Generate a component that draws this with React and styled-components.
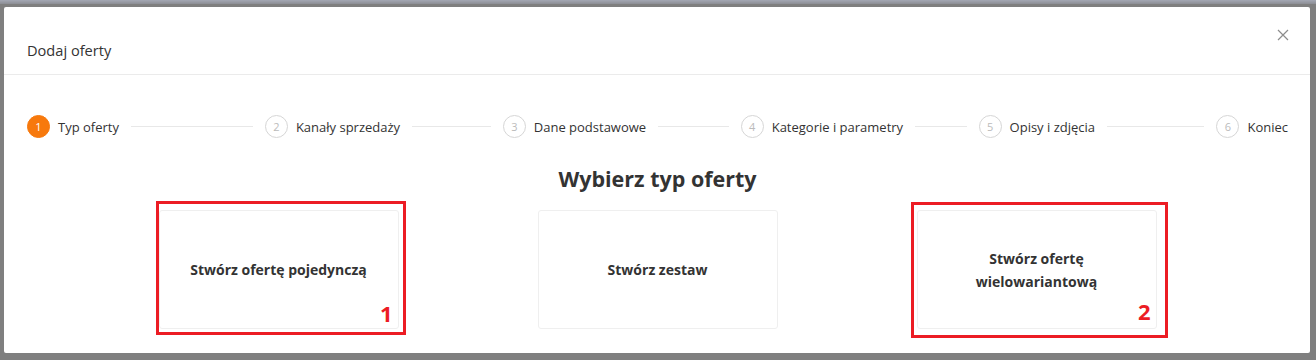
import React from "react"
import styled, { createGlobalStyle } from "styled-components"

const GlobalStyle = createGlobalStyle`
  html, body {
    margin: 0;
    padding: 0;
    background: #7f7f7f;
  }
  body {
    font-family: "Open Sans", "Noto Sans", sans-serif;
    color: #333;
  }
`

const steps = [
  "Typ oferty",
  "Kanały sprzedaży",
  "Dane podstawowe",
  "Kategorie i parametry",
  "Opisy i zdjęcia",
  "Koniec"
]

const cards = [
  { label: "Stwórz ofertę pojedynczą", mark: { n: 1, t: 9, r: 7, b: 6, l: 3, nr: 10, nb: 8 } },
  { label: "Stwórz zestaw" },
  { label: "Stwórz ofertę wielowariantową", mark: { n: 2, t: 8, r: 11, b: 9, l: 6, nr: 14, nb: 13 } }
]

const App = () => {
  return (
    <Page>
      <GlobalStyle />
      <TopStrip />
      <Modal>
        <Header>
          <Title>Dodaj oferty</Title>
          <Close aria-label="Zamknij">
            <svg width="12" height="12" viewBox="0 0 12 12">
              <path d="M1 1L11 11M11 1L1 11" stroke="#8c8c8c" strokeWidth="1.2" fill="none" />
            </svg>
          </Close>
        </Header>
        <Body>
          <Steps>
            {steps.map((s, i) => {
              const last = i === steps.length - 1
              return (
                <Step key={s} last={last}>
                  <StepIcon active={i === 0}>{i + 1}</StepIcon>
                  <StepLabel>{s}</StepLabel>
                  {!last && <StepLine />}
                </Step>
              )
            })}
          </Steps>
          <Heading>Wybierz typ oferty</Heading>
          <Cards>
            {cards.map(c => (
              <CardWrap key={c.label}>
                <Card>{c.label}</Card>
                {c.mark && (
                  <Mark t={c.mark.t} r={c.mark.r} b={c.mark.b} l={c.mark.l}>
                    <MarkNumber nr={c.mark.nr} nb={c.mark.nb}>{c.mark.n}</MarkNumber>
                  </Mark>
                )}
              </CardWrap>
            ))}
          </Cards>
        </Body>
      </Modal>
    </Page>
  )
}

const Page = styled.div`
  position: relative;
  height: 360px;
  box-sizing: border-box;
  padding: 7px 6px 7px 4px;
  background: #7f7f7f;
  overflow: hidden;
`

const TopStrip = styled.div`
  position: absolute;
  top: 0;
  left: 0;
  right: 0;
  height: 4px;
  background: linear-gradient(#a4a8b4, #8c8e94);
`

const Modal = styled.div`
  position: relative;
  height: 100%;
  background: #fff;
  border-radius: 2px;
  display: flex;
  flex-direction: column;
`

const Header = styled.div`
  position: relative;
  padding: 32px 23px 13px;
  border-bottom: 1px solid #ebebeb;
`

const Title = styled.div`
  font-size: 14.6px;
  line-height: 22px;
  color: #333;
`

const Close = styled.span`
  position: absolute;
  top: 22px;
  right: 21px;
  width: 12px;
  height: 12px;
  display: flex;
`

const Body = styled.div`
  padding: 40px 22px 0 23px;
  display: flex;
  flex-direction: column;
`

const Steps = styled.div`
  display: flex;
  align-items: center;
`

const Step = styled.div`
  display: flex;
  align-items: center;
  flex: ${p => (p.last ? "none" : "1")};
`

const StepIcon = styled.span`
  width: 23px;
  height: 23px;
  box-sizing: border-box;
  border-radius: 50%;
  display: flex;
  align-items: center;
  justify-content: center;
  font-size: 11px;
  flex: none;
  background: ${p => (p.active ? "#f7790d" : "#fff")};
  border: 1px solid ${p => (p.active ? "#f7790d" : "#d6d6d6")};
  color: ${p => (p.active ? "#fff" : "#bbb")};
`

const StepLabel = styled.span`
  margin-left: 8px;
  font-size: 13px;
  color: #333;
  white-space: nowrap;
`

const StepLine = styled.span`
  flex: 1;
  height: 1px;
  background: #e8e8e8;
  margin: 0 12px;
`

const Heading = styled.h2`
  margin: 25px 0 15px;
  text-align: center;
  font-size: 21.5px;
  line-height: 32px;
  font-weight: 700;
  color: #333;
`

const Cards = styled.div`
  display: flex;
  justify-content: center;
  gap: 139px;
`

const CardWrap = styled.div`
  position: relative;
`

const Card = styled.div`
  width: 240px;
  height: 119px;
  box-sizing: border-box;
  padding: 0 20px;
  border: 1px solid #efefef;
  border-radius: 3px;
  display: flex;
  align-items: center;
  justify-content: center;
  text-align: center;
  font-size: 14px;
  line-height: 23px;
  font-weight: 700;
  color: #333;
`

const Mark = styled.div`
  position: absolute;
  top: -${p => p.t}px;
  right: -${p => p.r}px;
  bottom: -${p => p.b}px;
  left: -${p => p.l}px;
  border: 3px solid #ec1c24;
  pointer-events: none;
`

const MarkNumber = styled.span`
  position: absolute;
  right: ${p => p.nr}px;
  bottom: ${p => p.nb}px;
  font-size: 22px;
  line-height: 22px;
  font-weight: 700;
  color: #ec1c24;
`

export default App
